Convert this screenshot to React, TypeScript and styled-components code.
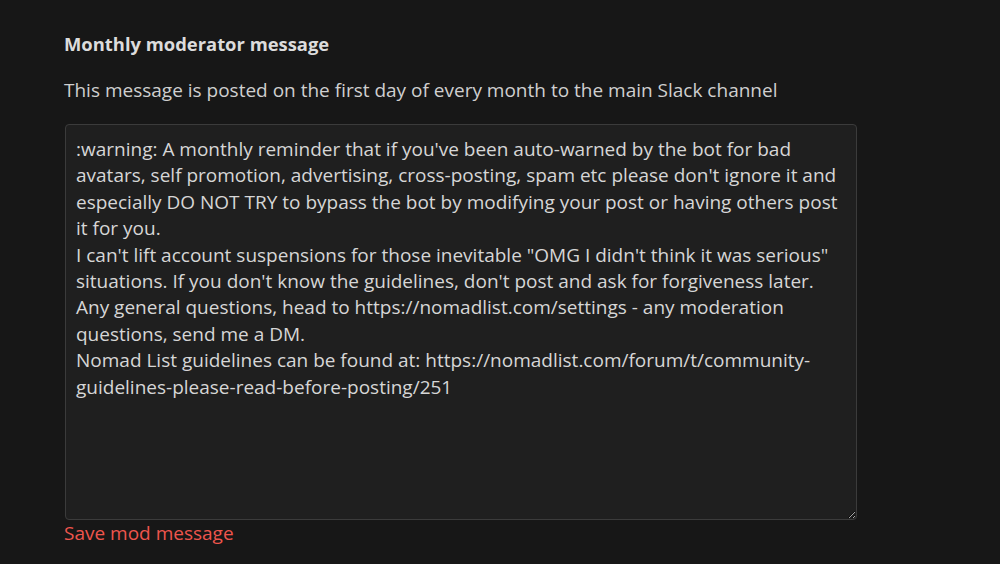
import React from "react"
import styled, { createGlobalStyle } from "styled-components"

const GlobalStyle = createGlobalStyle`
  html, body {
    margin: 0;
    padding: 0;
    background: #171717;
  }
  body {
    font-family: "Open Sans", Lato, sans-serif;
  }
`

const Page = styled.div`
  width: 1000px;
  height: 564px;
  overflow: hidden;
  padding: 32px 0 0 64px;
  box-sizing: border-box;
`

const Heading = styled.h3`
  margin: 0;
  font-size: 18.4px;
  font-weight: 700;
  color: #dcdcdc;
  line-height: 24px;
`

const Hint = styled.p`
  margin: 21px 0 0;
  font-size: 19px;
  color: #cfcfcf;
  line-height: 26px;
`

const MessageBox = styled.textarea`
  display: block;
  margin: 21px 0 0 1px;
  width: 792px;
  height: 396px;
  box-sizing: border-box;
  padding: 11px 10px;
  background: #1f1f1f;
  border: 1px solid #3b3b3b;
  border-radius: 4px;
  color: #d6d6d6;
  font-family: "Open Sans", Lato, sans-serif;
  font-size: 19px;
  line-height: 26.4px;
  outline: none;
  resize: vertical;
`

const SaveLink = styled.a`
  display: inline-block;
  margin-top: 0;
  font-size: 19px;
  line-height: 26px;
  color: #ee554d;
  cursor: pointer;
  text-decoration: none;
`

const message = `:warning: A monthly reminder that if you've been auto-warned by the bot for bad avatars, self promotion, advertising, cross-posting, spam etc please don't ignore it and especially DO NOT TRY to bypass the bot by modifying your post or having others post it for you.
I can't lift account suspensions for those inevitable "OMG I didn't think it was serious" situations. If you don't know the guidelines, don't post and ask for forgiveness later.
Any general questions, head to https://nomadlist.com/settings - any moderation questions, send me a DM.
Nomad List guidelines can be found at: https://nomadlist.com/forum/t/community-guidelines-please-read-before-posting/251`

export default function App() {
  return (
    <Page>
      <GlobalStyle />
      <Heading>Monthly moderator message</Heading>
      <Hint>This message is posted on the first day of every month to the main Slack channel</Hint>
      <MessageBox defaultValue={message} spellCheck={false} />
      <SaveLink>Save mod message</SaveLink>
    </Page>
  )
}
